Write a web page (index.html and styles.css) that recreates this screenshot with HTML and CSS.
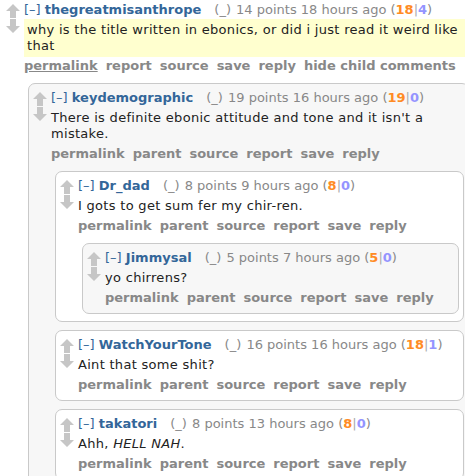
FILE: index.html
```html
<!DOCTYPE html>
<html>
<head>
  <title>comments</title>
  <link rel="stylesheet" href="styles.css">
</head>
<body>
<div class="page">

  <div class="comment top">
    <div class="midcol">
      <svg class="arrow" viewBox="0 0 14 14"><polygon points="7,0 14,7 10,7 10,14 4,14 4,7 0,7"/></svg>
      <svg class="arrow" viewBox="0 0 14 14"><polygon points="4,0 10,0 10,7 14,7 7,14 0,7 4,7"/></svg>
    </div>
    <div class="entry">
      <p class="tagline"><a class="expand">[–]</a> <a class="author">thegreatmisanthrope</a><span class="flair">(_)</span> 14 points 18 hours ago (<b class="ups">18</b><span class="sep">|</span><b class="downs">4</b>)</p>
      <div class="usertext highlight">
        <p>why is the title written in ebonics, or did i just read it weird like that</p>
      </div>
      <ul class="buttons">
        <li><a class="first">permalink</a></li>
        <li><a>report</a></li>
        <li><a>source</a></li>
        <li><a>save</a></li>
        <li><a>reply</a></li>
        <li><a>hide child comments</a></li>
      </ul>

      <div class="child">
        <div class="comment grey">
          <div class="midcol">
            <svg class="arrow" viewBox="0 0 14 14"><polygon points="7,0 14,7 10,7 10,14 4,14 4,7 0,7"/></svg>
            <svg class="arrow" viewBox="0 0 14 14"><polygon points="4,0 10,0 10,7 14,7 7,14 0,7 4,7"/></svg>
          </div>
          <div class="entry">
            <p class="tagline"><a class="expand">[–]</a> <a class="author">keydemographic</a><span class="flair">(_)</span> 19 points 16 hours ago (<b class="ups">19</b><span class="sep">|</span><b class="downs">0</b>)</p>
            <div class="usertext">
              <p>There is definite ebonic attitude and tone and it isn't a mistake.</p>
            </div>
            <ul class="buttons">
              <li><a>permalink</a></li>
              <li><a>parent</a></li>
              <li><a>source</a></li>
              <li><a>report</a></li>
              <li><a>save</a></li>
              <li><a>reply</a></li>
            </ul>

            <div class="child">
              <div class="comment">
                <div class="midcol">
                  <svg class="arrow" viewBox="0 0 14 14"><polygon points="7,0 14,7 10,7 10,14 4,14 4,7 0,7"/></svg>
                  <svg class="arrow" viewBox="0 0 14 14"><polygon points="4,0 10,0 10,7 14,7 7,14 0,7 4,7"/></svg>
                </div>
                <div class="entry">
                  <p class="tagline"><a class="expand">[–]</a> <a class="author">Dr_dad</a><span class="flair">(_)</span> 8 points 9 hours ago (<b class="ups">8</b><span class="sep">|</span><b class="downs">0</b>)</p>
                  <div class="usertext">
                    <p>I gots to get sum fer my chir-ren.</p>
                  </div>
                  <ul class="buttons">
                    <li><a>permalink</a></li>
                    <li><a>parent</a></li>
                    <li><a>source</a></li>
                    <li><a>report</a></li>
                    <li><a>save</a></li>
                    <li><a>reply</a></li>
                  </ul>

                  <div class="child">
                    <div class="comment grey">
                      <div class="midcol">
                        <svg class="arrow" viewBox="0 0 14 14"><polygon points="7,0 14,7 10,7 10,14 4,14 4,7 0,7"/></svg>
                        <svg class="arrow" viewBox="0 0 14 14"><polygon points="4,0 10,0 10,7 14,7 7,14 0,7 4,7"/></svg>
                      </div>
                      <div class="entry">
                        <p class="tagline"><a class="expand">[–]</a> <a class="author">Jimmysal</a><span class="flair">(_)</span> 5 points 7 hours ago (<b class="ups">5</b><span class="sep">|</span><b class="downs">0</b>)</p>
                        <div class="usertext">
                          <p>yo chirrens?</p>
                        </div>
                        <ul class="buttons">
                          <li><a>permalink</a></li>
                          <li><a>parent</a></li>
                          <li><a>source</a></li>
                          <li><a>report</a></li>
                          <li><a>save</a></li>
                          <li><a>reply</a></li>
                        </ul>
                      </div>
                    </div>
                  </div>
                </div>
              </div>

              <div class="comment">
                <div class="midcol">
                  <svg class="arrow" viewBox="0 0 14 14"><polygon points="7,0 14,7 10,7 10,14 4,14 4,7 0,7"/></svg>
                  <svg class="arrow" viewBox="0 0 14 14"><polygon points="4,0 10,0 10,7 14,7 7,14 0,7 4,7"/></svg>
                </div>
                <div class="entry">
                  <p class="tagline"><a class="expand">[–]</a> <a class="author">WatchYourTone</a><span class="flair">(_)</span> 16 points 16 hours ago (<b class="ups">18</b><span class="sep">|</span><b class="downs">1</b>)</p>
                  <div class="usertext">
                    <p>Aint that some shit?</p>
                  </div>
                  <ul class="buttons">
                    <li><a>permalink</a></li>
                    <li><a>parent</a></li>
                    <li><a>source</a></li>
                    <li><a>report</a></li>
                    <li><a>save</a></li>
                    <li><a>reply</a></li>
                  </ul>
                </div>
              </div>

              <div class="comment">
                <div class="midcol">
                  <svg class="arrow" viewBox="0 0 14 14"><polygon points="7,0 14,7 10,7 10,14 4,14 4,7 0,7"/></svg>
                  <svg class="arrow" viewBox="0 0 14 14"><polygon points="4,0 10,0 10,7 14,7 7,14 0,7 4,7"/></svg>
                </div>
                <div class="entry">
                  <p class="tagline"><a class="expand">[–]</a> <a class="author">takatori</a><span class="flair">(_)</span> 8 points 13 hours ago (<b class="ups">8</b><span class="sep">|</span><b class="downs">0</b>)</p>
                  <div class="usertext">
                    <p>Ahh, <em>HELL NAH</em>.</p>
                  </div>
                  <ul class="buttons">
                    <li><a>permalink</a></li>
                    <li><a>parent</a></li>
                    <li><a>source</a></li>
                    <li><a>report</a></li>
                    <li><a>save</a></li>
                    <li><a>reply</a></li>
                  </ul>
                </div>
              </div>
            </div>
          </div>
        </div>
      </div>
    </div>
  </div>

</div>
</body>
</html>
```

FILE: styles.css
```css
html, body {
  margin: 0;
  overflow: hidden;
  background: #fff;
}

body {
  font-family: "DejaVu Sans", Verdana, sans-serif;
  font-size: 13px;
  line-height: 16px;
  color: #222;
}

.page {
  width: 469px;
}

p, ul {
  margin: 0;
  padding: 0;
}

/* comment boxes */
.comment {
  display: flex;
  background: #fff;
  border: 1px solid #c9c9c9;
  border-radius: 7px;
  padding: 6px 4px 7px 4px;
  margin-bottom: 8px;
}

.comment.grey {
  background: #f7f7f7;
}

.comment:last-child {
  margin-bottom: 0;
}

.comment.top {
  border: none;
  border-radius: 0;
  padding: 2px 0 0 6px;
  background: transparent;
}

.midcol {
  width: 14px;
  margin-right: 4px;
  padding-top: 2px;
  flex: none;
}

.arrow {
  display: block;
  width: 14px;
  height: 14px;
  fill: #c6c6c6;
  margin-bottom: 1px;
}

.entry {
  flex: 1;
  min-width: 0;
}

/* tagline */
.tagline {
  color: #888;
  white-space: nowrap;
}

.expand {
  color: #369;
}

.author {
  color: #369;
  font-weight: bold;
}

.flair {
  margin-left: 13px;
  margin-right: 1px;
}

.ups {
  color: #ff8b24;
}

.downs {
  color: #9494ff;
}

.sep {
  color: #aaa;
}

/* body */
.usertext {
  margin: 1px 0;
  padding: 3px 0;
  letter-spacing: 0.3px;
}

.usertext.highlight {
  background: #ffffcf;
  padding-left: 3px;
}

/* buttons */
.buttons {
  list-style: none;
  display: flex;
  white-space: nowrap;
}

.buttons li {
  margin-right: 8px;
}

.buttons a {
  color: #888;
  font-weight: bold;
}

.buttons a.first {
  text-decoration: underline;
}

.child {
  margin: 9px 0 0 4px;
}
```
